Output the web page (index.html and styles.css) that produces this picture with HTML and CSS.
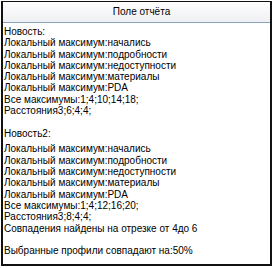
FILE: index.html
```html
<!DOCTYPE html>
<html lang="ru">
<head>
    <meta charset="UTF-8">
    <title>Поле отчёта</title>
    <link rel="stylesheet" href="styles.css">
</head>
<body>
    <div class="panel">
        <div class="panel-head">Поле отчёта</div>
        <div class="report">
            <div>Новость:</div>
            <div>Локальный максимум:начались</div>
            <div>Локальный максимум:подробности</div>
            <div>Локальный максимум:недоступности</div>
            <div>Локальный максимум:материалы</div>
            <div>Локальный максимум:PDA</div>
            <div>Все максимумы:1;4;10;14;18;</div>
            <div>Расстояния3;6;4;4;</div>
            <div class="blank"></div>
            <div>Новость2:</div>
            <div class="gap"></div>
            <div>Локальный максимум:начались</div>
            <div>Локальный максимум:подробности</div>
            <div>Локальный максимум:недоступности</div>
            <div>Локальный максимум:материалы</div>
            <div>Локальный максимум:PDA</div>
            <div>Все максимумы:1;4;12;16;20;</div>
            <div>Расстояния3;8;4;4;</div>
            <div>Совпадения найдены на отрезке от 4до 6</div>
            <div class="blank"></div>
            <div>Выбранные профили совпадают на:50%</div>
        </div>
    </div>
</body>
</html>
```

FILE: styles.css
```css
*{
    box-sizing: border-box;
}
body{
    margin: 0;
    background-color: #ffffff;
    font-family: "Liberation Sans", Arial, sans-serif;
    font-size: 10px;
    color: #000000;
}
.panel{
    margin: 1px 0 0 1px;
    width: 271px;
    height: 265px;
    border: 2px solid #111111;
    border-top-width: 1px;
    display: flex;
    flex-direction: column;
}
.panel-head{
    height: 21px;
    line-height: 20px;
    padding-left: 10px;
    text-align: center;
    background: linear-gradient(#ffffff, #eeeff2);
    border-bottom: 1px solid #8aa3bd;
}
.report{
    padding: 3px 0 0 1px;
    line-height: 11.3px;
}
.blank{
    height: 11.3px;
}
.gap{
    height: 4.5px;
}
```
